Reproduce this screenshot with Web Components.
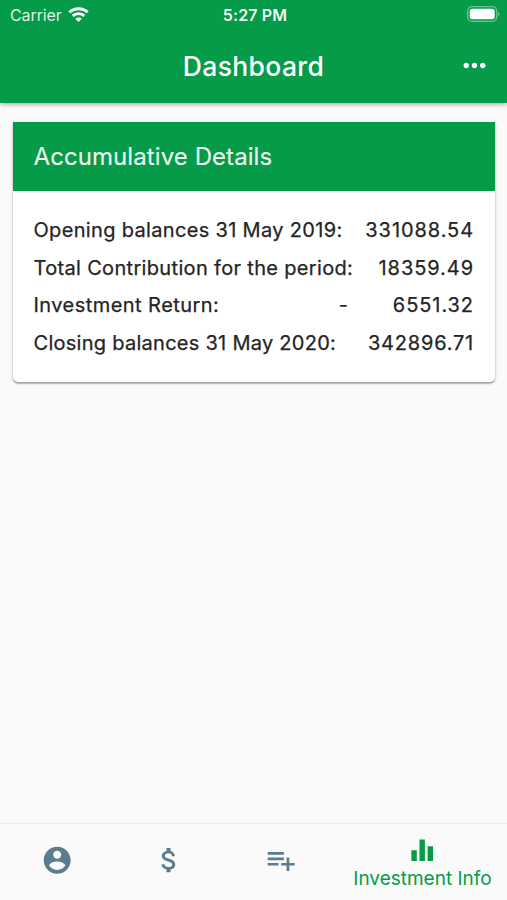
<!DOCTYPE html>
<html lang="en">
<head>
<meta charset="utf-8">
<title>Dashboard</title>
<style>
  :root {
    --main-color: #059b48;
    --nav-color: #5b7c8d;
    --page-color: #fafafa;
    --text-color: #242424;
  }
  body {
    margin: 0;
    font-family: Inter, Roboto, sans-serif;
    background: var(--page-color);
    color: var(--text-color);
  }
</style>
</head>
<body>
<investment-app>
  <status-bar slot="top"></status-bar>
  <app-header slot="top">Dashboard</app-header>
  <detail-card>
    <span slot="title">Accumulative Details</span>
    <detail-row value="331088.54">Opening balances 31 May 2019:</detail-row>
    <detail-row value="18359.49">Total Contribution for the period:</detail-row>
    <detail-row value="6551.32" sign="-" style="--label-spacing:.45px">Investment Return:</detail-row>
    <detail-row value="342896.71" style="--label-spacing:.27px;--value-spacing:.8px">Closing balances 31 May 2020:</detail-row>
  </detail-card>
  <nav-bar slot="bottom">
    <nav-item icon="person"></nav-item>
    <nav-item icon="money"></nav-item>
    <nav-item icon="playlist"></nav-item>
    <nav-item icon="chart" active>Investment Info</nav-item>
  </nav-bar>
</investment-app>

<script>
const icons = {
  person: 'M12 2C6.48 2 2 6.48 2 12s4.48 10 10 10 10-4.48 10-10S17.52 2 12 2zm0 3c1.66 0 3 1.34 3 3s-1.34 3-3 3-3-1.34-3-3 1.34-3 3-3zm0 14.2c-2.5 0-4.71-1.28-6-3.22.03-1.99 4-3.08 6-3.08 1.99 0 5.97 1.09 6 3.08-1.29 1.94-3.5 3.22-6 3.22z',
  money: 'M11.8 10.9c-2.27-.59-3-1.2-3-2.15 0-1.09 1.01-1.85 2.7-1.85 1.78 0 2.44.85 2.5 2.1h2.21c-.07-1.72-1.12-3.3-3.21-3.81V3h-3v2.16c-1.94.42-3.5 1.68-3.5 3.61 0 2.31 1.91 3.46 4.7 4.13 2.5.6 3 1.48 3 2.41 0 .69-.49 1.79-2.7 1.79-2.06 0-2.87-.92-2.98-2.1h-2.2c.12 2.19 1.76 3.42 3.68 3.83V21h3v-2.15c1.95-.37 3.5-1.5 3.5-3.55 0-2.84-2.43-3.81-4.7-4.4z',
  playlist: 'M14 10H2v2h12v-2zm0-4H2v2h12V6zm4 8v-4h-2v4h-4v2h4v4h2v-4h4v-2h-4zM2 16h8v-2H2v2z',
  chart: 'M10 20h4V4h-4v16zm-6 0h4v-8H4v8zM16 9v11h4V9h-4z',
  more: 'M6 10c-1.1 0-2 .9-2 2s.9 2 2 2 2-.9 2-2-.9-2-2-2zm12 0c-1.1 0-2 .9-2 2s.9 2 2 2 2-.9 2-2-.9-2-2-2zm-6 0c-1.1 0-2 .9-2 2s.9 2 2 2 2-.9 2-2-.9-2-2-2z'
};

function iconSvg(name) {
  return `<svg viewBox="0 0 24 24"><path d="${icons[name]}"/></svg>`;
}

class InvestmentApp extends HTMLElement {
  constructor() {
    super();
    this._root = this.attachShadow({ mode: 'open' });
    this._root.innerHTML = `<style>
      :host {
        display: flex;
        flex-direction: column;
        height: 900px;
      }
      .top {
        height: 103px;
        background: var(--main-color);
        color: white;
        box-shadow: 0 1px 5px rgba(0,0,0,.38);
      }
      main {
        flex: 1;
        padding: 19px 12px 0 13px;
      }
    </style>
    <div class="top"><slot name="top"></slot></div>
    <main><slot></slot></main>
    <slot name="bottom"></slot>`;
  }
}
window.customElements.define('investment-app', InvestmentApp);

class StatusBar extends HTMLElement {
  constructor() {
    super();
    this._root = this.attachShadow({ mode: 'open' });
    this._root.innerHTML = `<style>
      :host {
        display: grid;
        grid-template-columns: 1fr auto 1fr;
        align-items: center;
        height: 30px;
        padding: 0 7px 0 10px;
        font-size: 16px;
      }
      .carrier {
        display: flex;
        align-items: center;
        gap: 6px;
        letter-spacing: -.1px;
        color: rgba(255,255,255,.88);
      }
      .time {
        font-weight: 600;
        letter-spacing: .15px;
        color: rgba(255,255,255,.95);
      }
      svg { display: block; }
      .carrier svg { margin-top: -1px; }
      .battery { justify-self: end; margin-top: -2px; }
    </style>
    <div class="carrier"><span>Carrier</span>
      <svg width="21" height="16" viewBox="0 0 21 16" fill="none" stroke="white" stroke-width="2.9">
        <path d="M1.3 5.3C6.5.5 14.5.5 19.7 5.3"/>
        <path d="M4.7 8.9c3.3-3 8.3-3 11.6 0"/>
        <path d="M10.5 15l-3.3-3.3c1.8-1.7 4.8-1.7 6.6 0z" fill="white" stroke="none"/>
      </svg>
    </div>
    <div class="time">5:27 PM</div>
    <svg class="battery" width="33" height="16" viewBox="0 0 33 16">
      <rect x=".7" y=".7" width="29" height="14.6" rx="4.3" fill="none" stroke="white" stroke-opacity=".42" stroke-width="1.3"/>
      <rect x="2.7" y="2.8" width="25" height="10.4" rx="2.6" fill="white"/>
      <path d="M31.2 5.7c1.7.8 1.7 3.8 0 4.6z" fill="white" fill-opacity=".45"/>
    </svg>`;
  }
}
window.customElements.define('status-bar', StatusBar);

class AppHeader extends HTMLElement {
  constructor() {
    super();
    this._root = this.attachShadow({ mode: 'open' });
    this._root.innerHTML = `<style>
      :host {
        display: grid;
        grid-template-columns: 1fr auto 1fr;
        align-items: center;
        height: 71px;
        padding: 0 16px;
      }
      h1 {
        grid-column: 2;
        margin: 0;
        font-size: 26.5px;
        font-weight: 500;
        letter-spacing: .35px;
      }
      svg {
        display: block;
        width: 33px;
        height: 33px;
        justify-self: end;
        fill: white;
      }
    </style>
    <h1><slot></slot></h1>${iconSvg('more')}`;
  }
}
window.customElements.define('app-header', AppHeader);

class DetailCard extends HTMLElement {
  constructor() {
    super();
    this._root = this.attachShadow({ mode: 'open' });
    this._root.innerHTML = `<style>
      :host {
        display: block;
        height: 260px;
        background: white;
        border-radius: 0 0 5px 5px;
        box-shadow: 0 1px 3px rgba(0,0,0,.3), 0 2px 1px rgba(0,0,0,.16);
      }
      header {
        display: flex;
        align-items: center;
        height: 69px;
        padding: 0 20.5px;
        background: var(--main-color);
        color: rgba(255,255,255,.93);
        font-size: 24px;
        letter-spacing: .08px;
        -webkit-text-stroke: .2px;
      }
      .content { padding: 20px 21px 0 20.5px; }
    </style>
    <header><slot name="title"></slot></header>
    <div class="content"><slot></slot></div>`;
  }
}
window.customElements.define('detail-card', DetailCard);

class DetailRow extends HTMLElement {
  constructor() {
    super();
    this._root = this.attachShadow({ mode: 'open' });
    this._root.innerHTML = `<style>
      :host {
        display: flex;
        align-items: center;
        height: 37.7px;
        font-size: 20px;
        white-space: nowrap;
        -webkit-text-stroke: .25px;
      }
      .label { letter-spacing: var(--label-spacing, .33px); }
      .sign {
        flex: 1;
        text-align: right;
        padding-right: 45px;
      }
      .value {
        margin-left: auto;
        letter-spacing: var(--value-spacing, .93px);
      }
      .sign:empty { display: none; }
    </style>
    <span class="label"><slot></slot></span><span class="sign"></span><span class="value"></span>`;
  }

  connectedCallback() {
    this._root.querySelector('.sign').textContent = this.getAttribute('sign') || '';
    this._root.querySelector('.value').textContent = this.getAttribute('value');
  }
}
window.customElements.define('detail-row', DetailRow);

class NavBar extends HTMLElement {
  constructor() {
    super();
    this._root = this.attachShadow({ mode: 'open' });
    this._root.innerHTML = `<style>
      :host {
        display: grid;
        grid-template-columns: 112px 112px 113px 1fr;
        height: 76px;
        padding-left: 1px;
        border-top: 1px solid #ececec;
      }
    </style>
    <slot></slot>`;
  }
}
window.customElements.define('nav-bar', NavBar);

class NavItem extends HTMLElement {
  constructor() {
    super();
    this._root = this.attachShadow({ mode: 'open' });
    this._root.innerHTML = `<style>
      :host {
        display: flex;
        flex-direction: column;
        align-items: center;
        justify-content: center;
        padding-bottom: 4px;
        color: var(--nav-color);
        font-size: 19px;
        letter-spacing: 0;
        white-space: nowrap;
      }
      :host([active]) {
        padding-bottom: 0;
        color: var(--main-color);
      }
      svg {
        width: 32.4px;
        height: 32.4px;
        fill: currentColor;
      }
    </style>
    ${iconSvg(this.getAttribute('icon'))}<slot></slot>`;
  }
}
window.customElements.define('nav-item', NavItem);
</script>
</body>
</html>
